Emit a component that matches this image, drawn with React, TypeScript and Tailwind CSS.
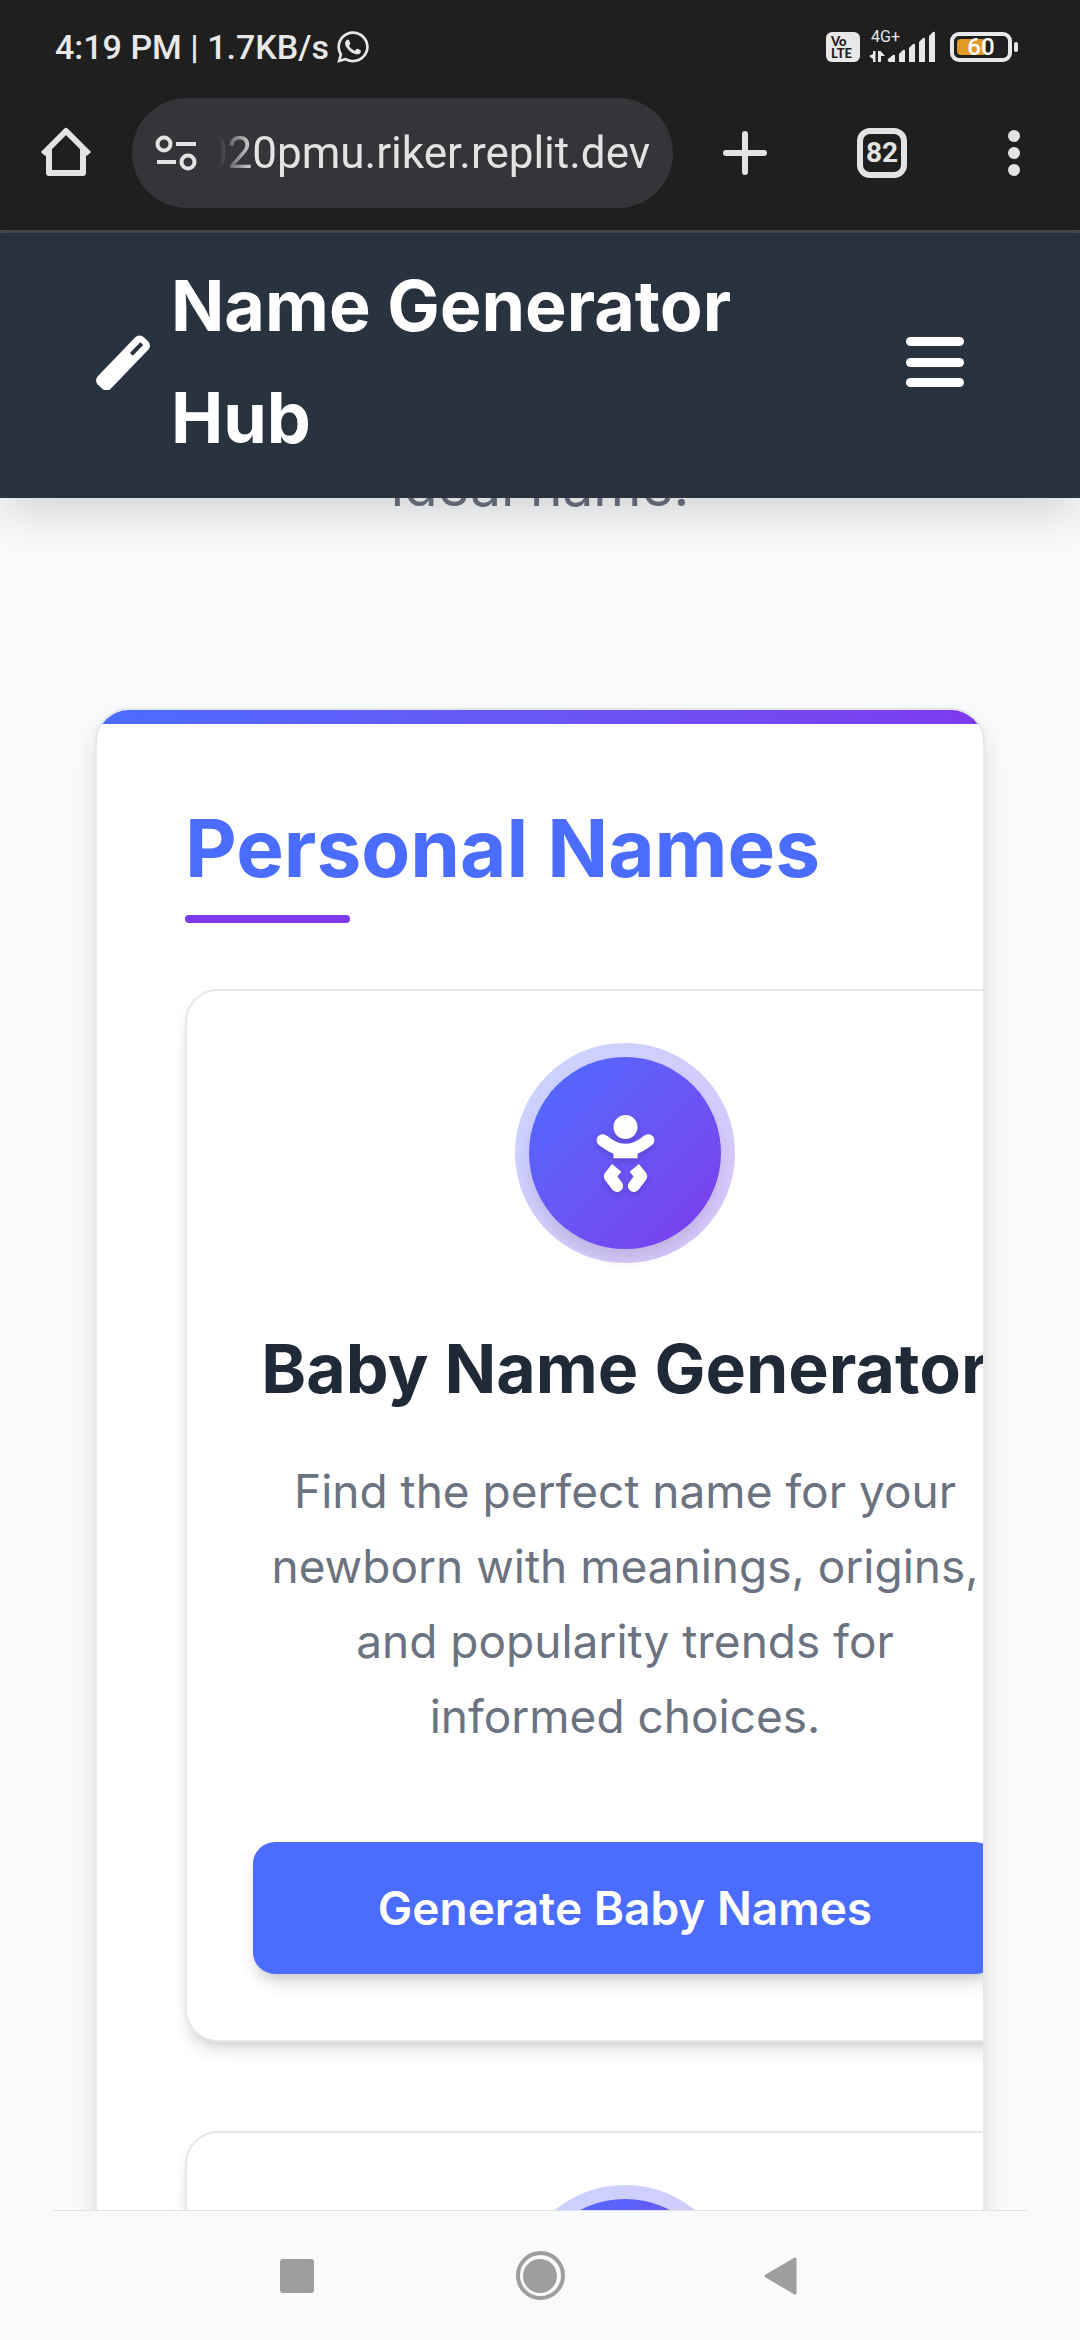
import type { ReactNode } from "react";
import { FaBaby, FaWhatsapp } from "react-icons/fa";

function Volte() {
  return (
    <div className="flex h-[30px] w-[34px] flex-col justify-center rounded-md bg-[#e8e8e8] pl-[5px] font-[Lato] text-[13px] leading-[12px] font-black text-[#1f1f1f]">
      <span>Vo</span>
      <span>LTE</span>
    </div>
  );
}

function Signal() {
  return (
    <div className="flex w-[68px] flex-col">
      <svg viewBox="0 0 68 34" className="h-[34px] w-[68px] overflow-visible" fill="#e8e8e8" role="img" aria-label="Mobile signal">
        <text x="2" y="12" fontSize="16" fontFamily="Roboto">4G+</text>
        <path d="M4 21h2.500v11H4v-3L0 26l4-2zM9 21h2.500l4.500 5h-4v6H9z" />
        <path d="M19 29l5-4q2-1 2 1v6h-5q-3 0-2-3zM30 24l4-4q2-1 2 1v11h-6zM40 18l4-4q2-1 2 1v17h-6zM50 12l4-4q2-1 2 1v23h-6zM60 6l4-4q2-1 2 1v29h-6z" />
      </svg>
    </div>
  );
}

function Battery() {
  return (
    <div className="flex items-center gap-[2px]">
      <div className="relative flex h-[30px] w-[62px] items-center justify-center rounded-[9px] border-4 border-[#e8e8e8]">
        <div className="absolute inset-y-[3px] left-[3px] w-[29px] rounded-sm bg-[#e29a27]" />
        <span className="relative font-[Roboto] text-[24px] leading-none font-medium text-white">60</span>
      </div>
      <div className="h-[10px] w-1 rounded-sm bg-[#e8e8e8]" />
    </div>
  );
}

function StatusBar() {
  return (
    <div className="flex h-[94px] items-center justify-between pr-[62px] pl-[55px] text-[#e8e8e8]">
      <div className="flex items-center gap-[6px]">
        <span className="font-[Roboto] text-[34px] leading-10 font-medium">4:19 PM | 1.7KB/s</span>
        <FaWhatsapp className="size-[36px]" />
      </div>
      <div className="flex items-center">
        <Volte />
        <div className="w-[9px]" />
        <Signal />
        <div className="w-[13px]" />
        <Battery />
      </div>
    </div>
  );
}

function BrowserBar() {
  return (
    <div className="flex items-center border-b-3 border-[#474747] pt-1 pr-[53px] pb-[22px] pl-10 text-[#e3e3e3]">
      <button aria-label="Home" className="mr-10 size-[52px]">
        <svg viewBox="0 0 52 52" fill="none" stroke="currentColor" strokeWidth="6" strokeLinejoin="round">
          <path d="M3 27 26 4l23 23M9 22v24h34V22" strokeLinecap="butt" />
        </svg>
      </button>
      <div className="flex h-[110px] flex-1 items-center rounded-full bg-[#343539] pr-[23px] pl-[23px]">
        <button aria-label="Site information" className="h-9 w-[42px] shrink-0">
          <svg viewBox="0 0 42 36" fill="none" stroke="currentColor" strokeWidth="4">
            <circle cx="9" cy="9" r="6.500" />
            <circle cx="33" cy="27" r="6.500" />
            <path d="M21 9h20M2 27h19" />
          </svg>
        </button>
        <input
          aria-label="Address"
          readOnly
          value="020pmu.riker.replit.dev"
          className="h-16 w-0 min-w-0 flex-1 text-right font-[Roboto] text-[44px] outline-none [mask-image:linear-gradient(90deg,transparent_22px,black_58px)]"
        />
      </div>
      <button aria-label="New tab" className="ml-[49px] size-[46px]">
        <svg viewBox="0 0 46 46" stroke="currentColor" strokeWidth="6" strokeLinecap="round">
          <path d="M23 4v38M4 23h38" />
        </svg>
      </button>
      <button
        aria-label="Switch tabs"
        className="ml-[89px] flex size-[50px] items-center justify-center rounded-[13px] border-6 border-current font-[Roboto] text-[28px] leading-none font-bold"
      >
        82
      </button>
      <button aria-label="More options" className="ml-[94px] flex h-12 w-[26px] flex-col items-center justify-center gap-[5px]">
        <span className="size-3 rounded-full bg-current" />
        <span className="size-3 rounded-full bg-current" />
        <span className="size-3 rounded-full bg-current" />
      </button>
    </div>
  );
}

function SiteHeader() {
  return (
    <header className="relative z-10 flex items-center justify-between bg-[#29333f] pt-[17px] pr-[116px] pb-6 pl-[95px] text-white shadow-[0_18px_44px_-4px_rgba(0,0,0,0.16)]">
      <a href="#home" className="flex items-center gap-[20px]">
        <svg viewBox="0 0 56 56" className="size-14 shrink-0">
          <g transform="rotate(-46 28 29)">
            <rect x="-5" y="20" width="66" height="18" rx="6" fill="currentColor" />
            <rect x="40" y="27" width="15" height="4" fill="#29333f" />
          </g>
        </svg>
        <span className="max-w-[640px] font-[Inter] text-[70px] leading-[112px] font-bold">Name Generator Hub</span>
      </a>
      <button aria-label="Menu" className="flex h-[50px] w-[58px] flex-col justify-between">
        <span className="h-[9px] rounded-full bg-white" />
        <span className="h-[9px] rounded-full bg-white" />
        <span className="h-[9px] rounded-full bg-white" />
      </button>
    </header>
  );
}

function IconBadge({ children }: { children?: ReactNode }) {
  return (
    <div className="size-[220px] shrink-0 rounded-full bg-linear-135 from-[#4a6cff]/30 to-[#7c3aed]/30 p-[14px]">
      <div className="flex size-48 items-center justify-center rounded-full bg-linear-135 from-[#4a6cff] to-[#7c3aed] text-white shadow-[0_10px_16px_-3px_rgba(0,0,0,0.12)]">
        {children}
      </div>
    </div>
  );
}

function GeneratorCard({ children }: { children: ReactNode }) {
  return (
    <article className="flex w-[880px] flex-col items-center rounded-[33px] border-2 border-[#e5e7eb] bg-white px-[66px] pt-[52px] pb-[66px] text-center shadow-[0_11px_17px_-3px_rgba(0,0,0,0.12),0_6px_11px_-5px_rgba(0,0,0,0.1)]">
      {children}
    </article>
  );
}

function NavBar() {
  return (
    <nav className="flex h-[130px] shrink-0 flex-col bg-[#f9fafc] text-[#9e9e9e]">
      <div className="mx-[53px] h-px bg-[#dfe1e3]" />
      <div className="flex flex-1 items-center justify-center gap-[202px]">
        <button aria-label="Recent apps" className="size-[34px] rounded-[3px] bg-current" />
        <button aria-label="Home screen" className="flex size-[49px] items-center justify-center rounded-full border-4 border-current">
          <span className="size-[34px] rounded-full bg-current" />
        </button>
        <button aria-label="Back" className="h-9 w-[34px]">
          <svg viewBox="0 0 34 36" className="overflow-visible" fill="currentColor" stroke="currentColor" strokeWidth="3" strokeLinejoin="round">
            <path d="M28 1v34L-1 18z" />
          </svg>
        </button>
      </div>
    </nav>
  );
}

export default function App() {
  return (
    <div className="flex h-screen flex-col overflow-hidden bg-[#f8fafc] font-[Inter]">
      <div className="shrink-0 bg-[#1f1f1f]">
        <StatusBar />
        <BrowserBar />
      </div>
      <SiteHeader />
      <main className="min-h-0 flex-1 overflow-hidden">
        <p className="-mt-[50px] text-center text-[55px] leading-[76px] text-[#6b7280]">ideal name.</p>
        <section className="mx-[95px] mt-[184px] overflow-hidden rounded-[34px] border-2 border-[#e5e7eb] bg-white shadow-[0_12px_24px_-2px_rgba(0,0,0,0.14)]">
          <div className="h-[14px] bg-linear-to-r from-[#4a6cff] to-[#7c3aed]" />
          <div className="flex flex-col items-start px-[88px] pt-[78px] pb-[88px]">
            <h2 className="text-[80px] leading-[92px] font-bold text-[#4a6cff]">Personal Names</h2>
            <div className="mt-[21px] h-2 w-[165px] rounded-full bg-[#7c3aed]" />
            <div className="mt-[66px] flex flex-col gap-[89px]">
              <GeneratorCard>
                <IconBadge>
                  <FaBaby className="size-[77px] drop-shadow-[0_3px_3px_rgba(0,0,0,0.15)]" />
                </IconBadge>
                <h3 className="mt-[67px] text-[68px] leading-[76px] font-bold whitespace-nowrap text-[#1f2937]">
                  Baby Name Generator
                </h3>
                <p className="mt-12 max-w-[720px] text-[46px] leading-[75px] text-[#6b7280]">
                  Find the perfect name for your newborn with meanings, origins, and popularity trends for informed choices.
                </p>
                <button className="mt-[88px] h-[132px] w-full rounded-[22px] bg-[#4a6cff] text-[46px] font-semibold text-white shadow-[0_11px_17px_-3px_rgba(0,0,0,0.14),0_6px_11px_-5px_rgba(0,0,0,0.12)]">
                  Generate Baby Names
                </button>
              </GeneratorCard>
              <GeneratorCard>
                <IconBadge />
              </GeneratorCard>
            </div>
          </div>
        </section>
      </main>
      <NavBar />
    </div>
  );
}
